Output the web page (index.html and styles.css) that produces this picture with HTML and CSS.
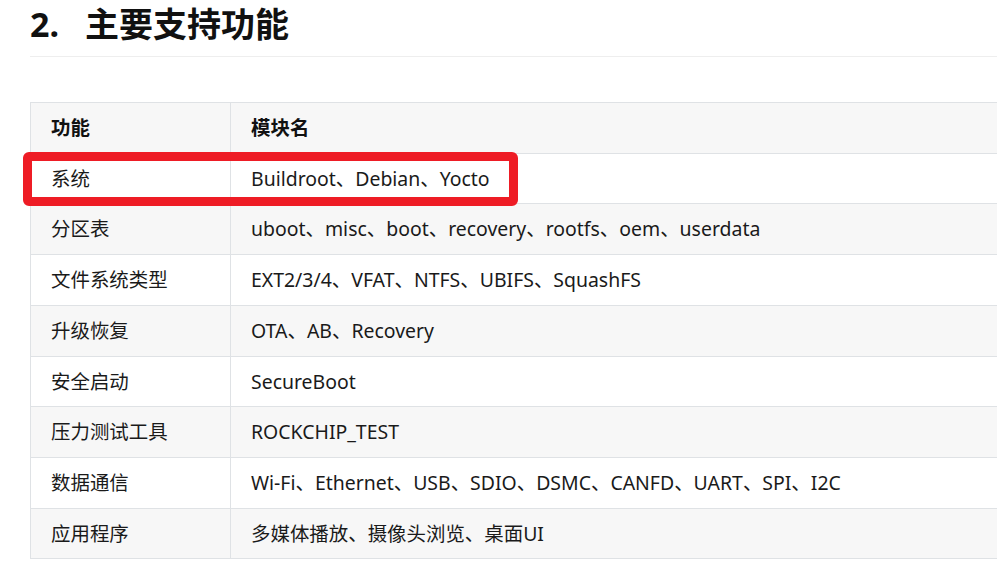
FILE: index.html
```html
<!DOCTYPE html>
<html lang="zh-CN">
<head>
<meta charset="utf-8">
<title>主要支持功能</title>
<link rel="stylesheet" href="styles.css">
</head>
<body>
<main class="doc">
  <h2 class="section-title"><span class="section-num">2.</span>主要支持功能</h2>
  <div class="table-wrap">
    <table class="feature-table">
      <thead>
        <tr><th class="col-a">功能</th><th>模块名</th></tr>
      </thead>
      <tbody>
        <tr class="highlight-row"><td>系统</td><td>Buildroot、Debian、Yocto</td></tr>
        <tr><td>分区表</td><td>uboot、misc、boot、recovery、rootfs、oem、userdata</td></tr>
        <tr><td>文件系统类型</td><td>EXT2/3/4、VFAT、NTFS、UBIFS、SquashFS</td></tr>
        <tr><td>升级恢复</td><td>OTA、AB、Recovery</td></tr>
        <tr><td>安全启动</td><td>SecureBoot</td></tr>
        <tr><td>压力测试工具</td><td>ROCKCHIP_TEST</td></tr>
        <tr><td>数据通信</td><td>Wi-Fi、Ethernet、USB、SDIO、DSMC、CANFD、UART、SPI、I2C</td></tr>
        <tr><td>应用程序</td><td>多媒体播放、摄像头浏览、桌面UI</td></tr>
      </tbody>
    </table>
    <div class="annot-box"></div>
  </div>
</main>
</body>
</html>
```
FILE: styles.css
```css
html, body {
  margin: 0;
  padding: 0;
  background: #ffffff;
  overflow: hidden;
}
body {
  font-family: "Noto Sans", "Noto Sans CJK SC", sans-serif;
  color: #1a1a1a;
}
.doc {
  padding: 0 0 0 30px;
}
.section-title {
  margin: 0;
  padding: 4px 0 12px 0;
  font-size: 34px;
  line-height: 40px;
  font-weight: 700;
  color: #111111;
  border-bottom: 1px solid #eeeeee;
}
.section-num {
  display: inline-block;
  width: 55px;
}
.table-wrap {
  position: relative;
  margin-top: 45px;
}
.feature-table {
  border-collapse: collapse;
  width: 1000px;
  font-size: 19.45px;
  line-height: 29.7px;
}
.feature-table th,
.feature-table td {
  border: 1px solid #dfe2e5;
  padding: 10px 20px;
  text-align: left;
  vertical-align: middle;
}
.feature-table th {
  font-weight: 700;
  color: #111111;
}
.feature-table .col-a {
  width: 159px;
}
.feature-table thead tr,
.feature-table tbody tr:nth-child(even) {
  background: #f7f7f7;
}
.annot-box {
  position: absolute;
  left: -7px;
  top: 50px;
  width: 477px;
  height: 36px;
  border: 9px solid #ee1c25;
  border-radius: 6px;
}
```
